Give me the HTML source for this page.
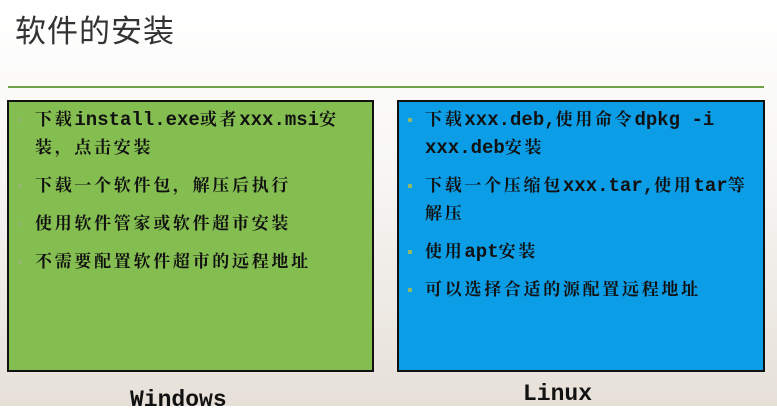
<!DOCTYPE html>
<html><head><meta charset="utf-8"><style>
body{margin:0;width:777px;height:406px;overflow:hidden;background:linear-gradient(#ffffff 0%,#f8f7f5 40%,#e6e0d8 100%);position:relative;font-family:"Liberation Serif","Noto Serif CJK SC",serif;}
.t{position:absolute;left:15px;top:6px;font:31px "Liberation Sans","Noto Sans CJK SC",sans-serif;color:#333;letter-spacing:1px}
.ln{position:absolute;left:8px;top:86px;width:756px;height:2px;background:#6fa34a}
.box{position:absolute;top:100px;height:272px;border:2px solid #111;box-sizing:border-box}
.g{left:7px;width:367px;background:#85be50}
.b{left:397px;width:368px;background:#0b9de6}
ul{margin:0;padding:0;list-style:none;position:absolute;left:26px;top:4px;right:4px}
li{position:relative;font-size:17px;line-height:28px;letter-spacing:2.7px;color:#111;margin-bottom:10px;font-weight:bold}
li:before{content:"";position:absolute;left:-17px;top:12px;width:4px;height:4px;background:#8fb86a}
.m{font-family:"Liberation Mono",monospace;font-size:19px;letter-spacing:0;font-weight:bold}
.lab{position:absolute;font:bold 23px "Liberation Mono",monospace;color:#111}
</style></head><body>
<div class="t">软件的安装</div>
<div class="ln"></div>
<div class="box g"><ul>
<li>下载<span class="m">install.exe</span>或者<span class="m">xxx.msi</span>安装，点击安装</li>
<li>下载一个软件包，解压后执行</li>
<li>使用软件管家或软件超市安装</li>
<li>不需要配置软件超市的远程地址</li>
</ul></div>
<div class="box b"><ul>
<li>下载<span class="m">xxx.deb,</span>使用命令<span class="m">dpkg -i xxx.deb</span>安装</li>
<li>下载一个压缩包<span class="m">xxx.tar,</span>使用<span class="m">tar</span>等解压</li>
<li>使用<span class="m">apt</span>安装</li>
<li>可以选择合适的源配置远程地址</li>
</ul></div>
<div class="lab" style="left:130px;top:387px">Windows</div>
<div class="lab" style="left:523px;top:381px">Linux</div>
</body></html>
